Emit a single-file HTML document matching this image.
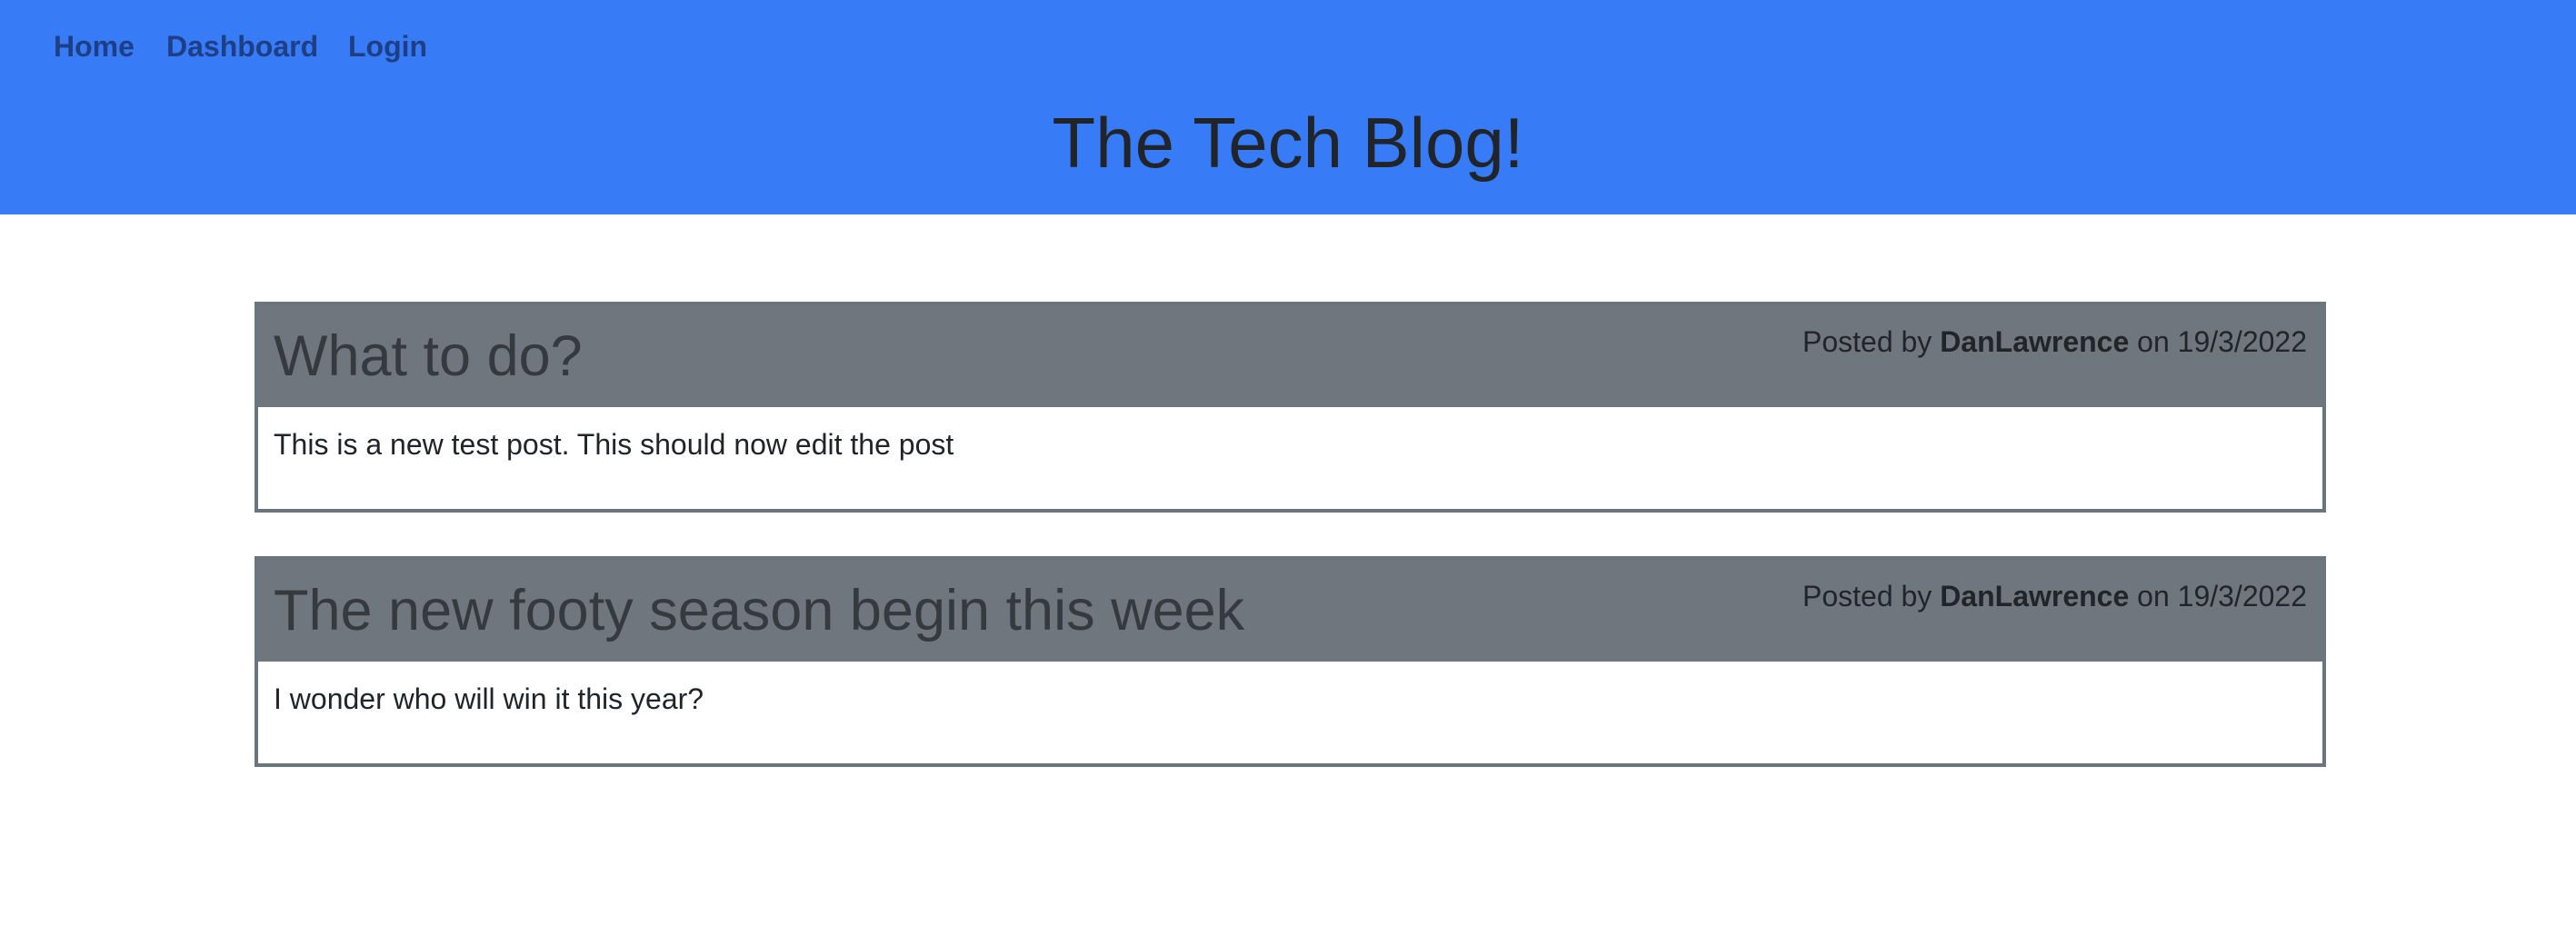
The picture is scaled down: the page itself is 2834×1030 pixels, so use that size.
<!DOCTYPE html>
<html><head><meta charset="utf-8"><style>
*{margin:0;padding:0;box-sizing:border-box}
body{width:2834px;height:1030px;background:#fff;font-family:"Liberation Sans",sans-serif;position:relative;overflow:hidden}
.hdr{position:absolute;left:0;top:0;width:2834px;height:236px;background:#377bf7}
.nav{position:absolute;top:31px;font-weight:bold;font-size:32px;color:#1e3f86;line-height:40px}
.title{position:absolute;left:0;width:2834px;top:107px;text-align:center;font-size:78px;color:#212529;line-height:100px}
.card{position:absolute;left:280px;width:2279px;border:4px solid #6c747d}
.ch{background:#6f767e;height:112px;position:relative}
.ch h2{position:absolute;left:17px;top:21px;font-weight:normal;font-size:63px;color:#343a40;line-height:70px;white-space:nowrap}
.ch .by{position:absolute;right:17px;top:21px;font-size:32px;color:#212529;line-height:38px}
.cb{height:112px;position:relative}
.cb p{position:absolute;left:17px;top:22px;font-size:32px;color:#212529;line-height:38px}
</style></head><body>
<div class="hdr">
<div class="nav" style="left:59px">Home</div>
<div class="nav" style="left:183px">Dashboard</div>
<div class="nav" style="left:383px">Login</div>
<div class="title">The Tech Blog!</div>
</div>
<div class="card" style="top:332px;height:232px">
<div class="ch"><h2>What to do?</h2><div class="by">Posted by <b>DanLawrence</b> on 19/3/2022</div></div>
<div class="cb"><p>This is a new test post. This should now edit the post</p></div>
</div>
<div class="card" style="top:612px;height:232px">
<div class="ch"><h2>The new footy season begin this week</h2><div class="by">Posted by <b>DanLawrence</b> on 19/3/2022</div></div>
<div class="cb"><p>I wonder who will win it this year?</p></div>
</div>
</body></html>
